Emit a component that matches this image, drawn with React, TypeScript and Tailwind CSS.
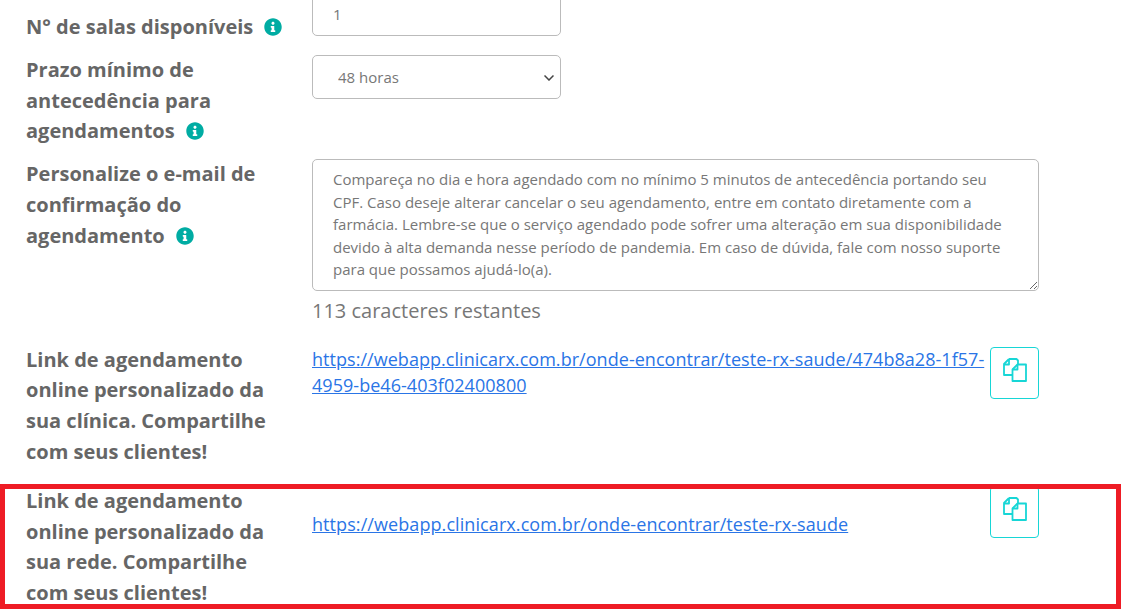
import { useState } from "react";

const message =
  "Compareça no dia e hora agendado com no mínimo 5 minutos de antecedência portando seu CPF. Caso deseje alterar cancelar o seu agendamento, entre em contato diretamente com a farmácia. Lembre-se que o serviço agendado pode sofrer uma alteração em sua disponibilidade devido à alta demanda nesse período de pandemia. Em caso de dúvida, fale com nosso suporte para que possamos ajudá-lo(a).";

function InfoIcon() {
  return (
    <svg viewBox="0 0 512 512" className="ml-[11px] inline-block h-[18px] w-[18px] align-[-2px] fill-[#00aca3]">
      <path d="M256 8C119 8 8 119 8 256s111 248 248 248 248-111 248-248S393 8 256 8zm0 96c25 0 44 19 44 44s-19 44-44 44-44-19-44-44 19-44 44-44zm64 284c0 7-5 12-12 12h-104c-7 0-12-5-12-12v-28c0-7 5-12 12-12h12v-72h-12c-7 0-12-5-12-12v-28c0-7 5-12 12-12h76c7 0 12 5 12 12v112h16c7 0 12 5 12 12v28z" />
    </svg>
  );
}

function CopyIcon() {
  return (
    <svg viewBox="0 0 24 24" className="-mt-[6px] h-[24px] w-[24px] fill-none stroke-[#17d6d6] stroke-[1.8]" strokeLinejoin="round">
      <path d="M6 1h7.500L15 2.500V6" />
      <path d="M6 1 1 6v11h8" />
      <path d="M1 6.500h5V1" />
      <path d="M14.500 6.500H23V23H9.500V11.500z" />
      <path d="M9.500 11.500h5v-5" />
    </svg>
  );
}

function Label({ children }: { children: React.ReactNode }) {
  return <div className="w-[286px] shrink-0 pt-[0.5px] pr-[26px] text-[20px] font-bold leading-[30.6px] text-[#666666]">{children}</div>;
}

function CopyButton() {
  return (
    <button className="flex h-[52px] w-[49px] shrink-0 items-center justify-center rounded-[4px] border border-[#17d6d6] bg-white">
      <CopyIcon />
    </button>
  );
}

export default function App() {
  const [text] = useState(message);

  return (
    <div className="relative h-[615px] w-[1129px] overflow-hidden bg-white font-['Open_Sans',sans-serif] text-[#777777]">
      <div className="-mt-2 flex w-[1039px] flex-col pl-[26px]">
        <div className="flex">
          <Label>
            <div className="pt-[19px] whitespace-nowrap">
              N° de salas disponíveis
              <InfoIcon />
            </div>
          </Label>
          <input
            readOnly
            value="1"
            className="h-[44px] w-[249px] rounded-[5px] border border-[#bbbbbb] px-5 text-[15px] outline-none"
          />
        </div>

        <div className="mt-[12.500px] flex">
          <Label>
            Prazo mínimo de antecedência para agendamentos
            <InfoIcon />
          </Label>
          <div className="relative w-full pt-[0.5px]">
            <select className="h-[44px] w-[249px] appearance-none rounded-[5px] border border-[#bbbbbb] bg-white pl-[25px] pr-6 text-[15px] outline-none">
              <option>48 horas</option>
            </select>
            <svg viewBox="0 0 10 6" className="pointer-events-none absolute left-[232px] top-[20px] h-[6px] w-[10px] fill-none stroke-[#444444] stroke-[1.5]">
              <path d="M0.500 0.500 5 5l4.500-4.500" />
            </svg>
          </div>
        </div>

        <div className="mt-[12px] flex">
          <Label>
            Personalize o e-mail de confirmação do agendamento
            <InfoIcon />
          </Label>
          <div className="w-full">
            <textarea
              readOnly
              value={text}
              className="block h-[132px] w-full resize rounded-[5px] border border-[#bbbbbb] px-5 pt-[8.400px] pb-2 text-[15px] leading-[22.5px] outline-none"
            />
            <p className="mt-[6px] text-[20px] leading-[28px]">113 caracteres restantes</p>
          </div>
        </div>

        <div className="mt-[19.500px] flex">
          <Label>Link de agendamento online personalizado da sua clínica. Compartilhe com seus clientes!</Label>
          <div className="flex w-full items-start gap-[3px] pt-[2.500px]">
            <a href="#" className="-mt-px min-w-0 flex-1 text-[18px] font-medium leading-[26px] tracking-[0.04px] text-[#2a75e6] underline">
              https://webapp.clinicarx.com.br/onde-encontrar/teste-rx-saude/474b8a28-1f57-4959-be46-403f02400800
            </a>
            <CopyButton />
          </div>
        </div>

        <div className="mt-[18.500px] flex">
          <Label>Link de agendamento online personalizado da sua rede. Compartilhe com seus clientes!</Label>
          <div className="flex w-full items-start gap-[5px]">
            <a href="#" className="mt-[25px] min-w-0 flex-1 text-[18px] font-medium leading-[26px] tracking-[0.08px] text-[#2a75e6] underline">
              https://webapp.clinicarx.com.br/onde-encontrar/teste-rx-saude
            </a>
            <CopyButton />
          </div>
        </div>
      </div>

      {/* highlight drawn on top of the screenshot */}
      <div className="pointer-events-none absolute left-0 top-[484px] h-[125px] w-[1121px] border-[5px] border-[#ee1c25]" />
    </div>
  );
}
